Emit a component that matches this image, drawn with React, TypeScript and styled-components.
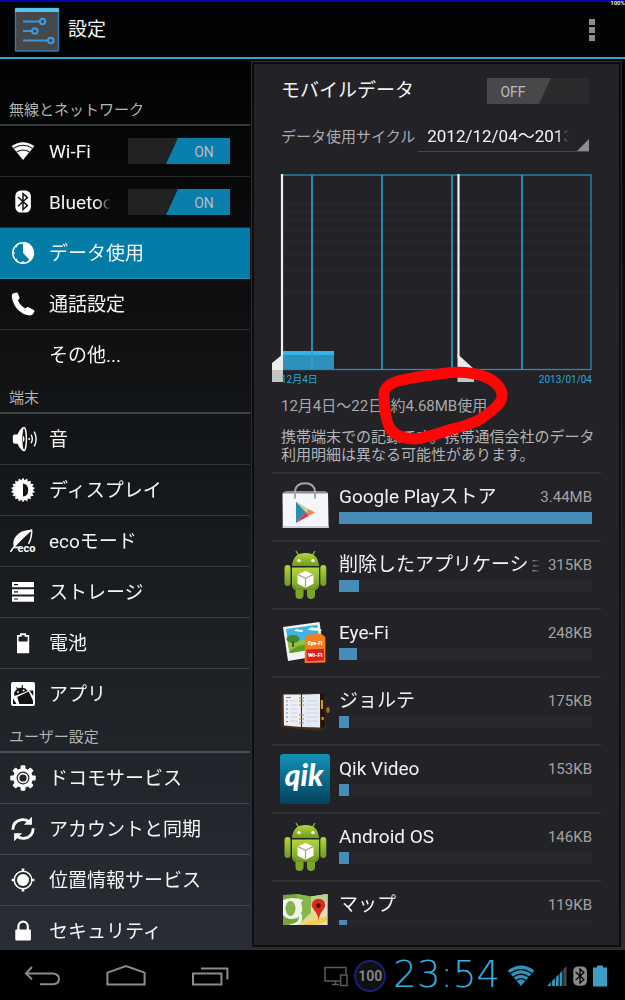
import React from 'react';
import styled, { createGlobalStyle } from 'styled-components';

const GlobalStyle = createGlobalStyle`
  *, *::before, *::after { box-sizing: border-box; }
  body {
    margin: 0;
    background: #000;
    color: #f2f2f2;
    font-family: Roboto, "Noto Sans CJK JP", sans-serif;
  }
`;

/* ---------- page frame ---------- */

const Screen = styled.div`
  display: flex;
  flex-direction: column;
  height: 100vh;
  overflow: hidden;
`;

const BatteryStrip = styled.div`
  position: relative;
  flex: none;
  height: 2px;
  background: #0404ac;
`;

const StripValue = styled.span`
  position: absolute;
  top: 0;
  right: 0;
  font-size: 6px;
  line-height: 6px;
  font-weight: 700;
  color: #e4e4e4;
`;

const ActionBar = styled.header`
  display: flex;
  flex: none;
  align-items: center;
  gap: 8px;
  height: 57px;
  padding: 0 30px 0 14px;
  background: #020303;
  border-bottom: 2px solid #2fa6d4;
`;

const AppTitle = styled.h1`
  flex: 1;
  margin: 0;
  font-size: 19px;
  line-height: 24px;
  font-weight: 400;
`;

const OverflowButton = styled.button`
  display: flex;
  flex-direction: column;
  gap: 2px;
  padding: 0;
  border: 0;
  background: none;
`;

const OverflowDot = styled.span`
  width: 6px;
  height: 6px;
  background: #8b8b8b;
`;

const Body = styled.div`
  display: flex;
  flex: 1;
  min-height: 0;
  background: linear-gradient(#010202, #101214 35%, #1c1f23 65%, #292d34);
`;

/* ---------- sidebar ---------- */

const Sidebar = styled.nav`
  flex: none;
  width: 40%;
  padding-top: 34px;
  overflow: hidden;
`;

const SectionTitle = styled.h2`
  height: 33px;
  margin: 0;
  padding: 5px 9px 0;
  border-bottom: 2px solid rgba(255, 255, 255, 0.2);
  color: #b4b4b4;
  font-size: 15px;
  line-height: 24px;
  font-weight: 400;
`;

const MenuRow = styled.div<{ $selected?: boolean; $last?: boolean }>`
  display: flex;
  align-items: center;
  gap: 17px;
  height: 51px;
  padding-right: 20px;
  border-bottom: 1px solid ${(p) => (p.$last ? 'transparent' : 'rgba(255, 255, 255, 0.13)')};
  background: ${(p) => (p.$selected ? '#047ca8' : 'none')};
`;

const MenuLink = styled.a`
  display: flex;
  flex: 1;
  align-items: center;
  gap: 12px;
  min-width: 0;
  padding: 12px 0 12px 9px;
  color: #f4f4f4;
  font-size: 19px;
  line-height: 24px;
  text-decoration: none;
`;

const FadeLabel = styled.span`
  flex: 1;
  min-width: 0;
  padding-top: 2px;
  overflow: hidden;
  white-space: nowrap;
  mask-image: linear-gradient(to left, transparent, #000 14px);
`;

const MenuIcon = styled.svg`
  flex: none;
  width: 28px;
  height: 28px;
  overflow: visible;
`;

/* ---------- switches ---------- */

const SwitchLabel = styled.label`
  position: relative;
  display: block;
  flex: none;
  width: 102px;
  height: 26px;
`;

const SwitchInput = styled.input`
  position: absolute;
  inset: 0;
  width: 100%;
  height: 100%;
  margin: 0;
  opacity: 0;
`;

const SwitchTrack = styled.span<{ $on: boolean }>`
  display: flex;
  justify-content: ${(p) => (p.$on ? 'flex-end' : 'flex-start')};
  height: 100%;
  background: ${(p) => (p.$on ? '#212323' : '#2b2b2d')};
`;

const SwitchThumb = styled.span<{ $on: boolean }>`
  width: 64px;
  padding-top: 1px;
  padding-left: ${(p) => (p.$on ? '12px' : '0')};
  padding-right: ${(p) => (p.$on ? '0' : '12px')};
  background: ${(p) => (p.$on ? '#087fac' : '#48484a')};
  clip-path: ${(p) =>
    p.$on ? 'polygon(12px 0, 100% 0, 100% 100%, 0 100%)' : 'polygon(0 0, 100% 0, 52px 100%, 0 100%)'};
  color: #b9bcbd;
  font-size: 14px;
  line-height: 26px;
  text-align: center;
`;

/* ---------- detail panel ---------- */

const PanelFrame = styled.main`
  display: flex;
  flex: 1;
  min-width: 0;
  margin: 2px 3px 2px 1px;
  padding: 2px;
  border: 1px solid #2c2e31;
  background: #0b0c0e;
`;

const Panel = styled.div`
  display: flex;
  flex: 1;
  flex-direction: column;
  min-width: 0;
  padding: 0 18px 20px;
  background: #222227;
`;

const SettingRow = styled.div`
  display: flex;
  flex: none;
  align-items: center;
  justify-content: space-between;
  height: 52px;
  padding: 2px 12px 0 9px;
`;

const PanelTitle = styled.h2`
  margin: 0;
  font-size: 19px;
  line-height: 26px;
  font-weight: 400;
`;

const CycleRow = styled.div`
  display: flex;
  flex: none;
  align-items: center;
  gap: 3px;
  height: 42px;
  padding: 0 12px 0 9px;
`;

const CycleLabel = styled.label`
  flex: none;
  color: #ababad;
  font-size: 15px;
  line-height: 24px;
`;

const Spinner = styled.div`
  position: relative;
  flex: 1;
  min-width: 0;
  height: 30px;
  border-bottom: 1px solid #48484b;
  &::after {
    content: '';
    position: absolute;
    right: 0;
    bottom: 0;
    border-style: solid;
    border-width: 0 0 12px 12px;
    border-color: transparent transparent #8d8d8f transparent;
  }
`;

const CycleSelect = styled.select`
  width: calc(100% - 20px);
  height: 28px;
  padding: 0 0 0 9px;
  border: 0;
  appearance: none;
  background: none;
  color: #f4f4f4;
  font-family: inherit;
  font-size: 17px;
  text-overflow: clip;
  mask-image: linear-gradient(to left, transparent, #000 12px);
`;

const ChartBlock = styled.figure`
  position: relative;
  flex: none;
  margin: 16px 9px 0;
`;

const ChartSvg = styled.svg`
  display: block;
  width: 100%;
  height: auto;
  overflow: visible;
`;

const ChartAxis = styled.figcaption`
  display: flex;
  justify-content: space-between;
  padding-top: 1px;
  color: #2fa6d4;
  font-size: 10px;
  line-height: 16px;
`;

const Marking = styled.svg`
  position: absolute;
  top: 192px;
  left: 92px;
  width: 140px;
  height: 84px;
  pointer-events: none;
`;

const UsageText = styled.p`
  flex: none;
  margin: 9px 9px 0;
  color: #a9a9ab;
  font-size: 15px;
  line-height: 18px;
  white-space: nowrap;
`;

const UsageNote = styled(UsageText)`
  margin-top: 13px;
  color: #b4b4b6;
`;

const AppList = styled.ul`
  flex: 1;
  min-height: 0;
  margin: 8px 0 0;
  padding: 0;
  overflow: hidden;
  list-style: none;
`;

const AppItem = styled.li`
  display: flex;
  align-items: center;
  gap: 9px;
  height: 68px;
  padding: 0 9px 0 8px;
  border-top: 2px solid #323235;
`;

const AppIcon = styled.svg`
  flex: none;
  width: 50px;
  height: 50px;
`;

const AppInfo = styled.div`
  flex: 1;
  align-self: flex-start;
  min-width: 0;
  padding-top: 9px;
`;

const AppLine = styled.div`
  display: flex;
  align-items: center;
  gap: 8px;
  font-size: 19px;
  line-height: 24px;
`;

const AppSize = styled.span`
  padding-top: 2px;
  color: #a2a2a4;
  font-size: 15px;
  line-height: 22px;
`;

const BarTrack = styled.div`
  height: 12px;
  margin-top: 3px;
  background: #28272c;
`;

const BarFill = styled.div`
  height: 100%;
  background: #468cb9;
`;

/* ---------- system bar ---------- */

const SystemBar = styled.footer`
  display: flex;
  flex: none;
  align-items: center;
  justify-content: space-between;
  height: 50px;
  padding: 2px 18px 0 0;
  background: #000;
`;

const NavKeys = styled.div`
  display: flex;
`;

const NavKey = styled.button`
  display: flex;
  justify-content: center;
  width: 84px;
  padding: 0;
  border: 0;
  background: none;
`;

const NavSvg = styled.svg`
  width: 40px;
  height: 24px;
  fill: none;
  stroke: #8c8c8c;
  stroke-width: 2;
`;

const Status = styled.div`
  display: flex;
  align-items: center;
  gap: 6px;
`;

const Level = styled.span`
  display: flex;
  align-items: center;
  justify-content: center;
  width: 32px;
  height: 32px;
  border: 2px solid #1b2078;
  border-radius: 50%;
  background: #101013;
  color: #808080;
  font-size: 14px;
  font-weight: 700;
`;

const Clock = styled.time`
  padding: 0 1px 3px;
  color: #35b0e0;
  font-family: "DejaVu Sans", sans-serif;
  font-size: 37px;
  line-height: 40px;
  font-weight: 200;
`;

const StatusSvg = styled.svg<{ $w: number }>`
  flex: none;
  width: ${(p) => p.$w}px;
  height: 24px;
`;

/* ---------- icons ---------- */

const DARK = '#121416';

const toothPath = (count: number, outer: number, inner: number) =>
  Array.from({ length: count * 2 }, (_, i) => {
    const r = i % 2 ? inner : outer;
    const a = (Math.PI * i) / count - Math.PI / 2;
    return `${i ? 'L' : 'M'}${(14 + r * Math.cos(a)).toFixed(2)} ${(14 + r * Math.sin(a)).toFixed(2)}`;
  }).join('') + 'Z';

const WifiShape = ({ color, bg }: { color: string; bg: string }) => (
  <>
    <path d="M14 23 2.6 9Q14 1.4 25.4 9Z" fill={color} />
    <path d="M4.6 11.4Q14 5.2 23.4 11.4M7.6 15Q14 11 20.4 15" fill="none" stroke={bg} strokeWidth="1.1" />
  </>
);

const BluetoothShape = ({ color, bg }: { color: string; bg: string }) => (
  <>
    <rect x="6.3" y="2.6" width="15.6" height="22" rx="5.5" fill={color} />
    <path d="M9 9l9.4 8.6-4.4 4V5.6l4.4 4L9 18.2" fill="none" stroke={bg} strokeWidth="1.5" />
  </>
);

const icons: Record<string, React.ReactNode> = {
  wifi: <WifiShape color="#fff" bg={DARK} />,
  bluetooth: <BluetoothShape color="#fff" bg={DARK} />,
  data: (
    <>
      <circle cx="14" cy="14" r="10.2" fill="none" stroke="#fff" strokeWidth="1.5" />
      <path d="M14 14V3A11 11 0 0 1 21.6 22Z" fill="#fff" />
      <path d="M4 14h2M14 24v-2M6.9 21.1l1.2-1.2M6.9 6.9l1.2 1.2" stroke="#fff" strokeWidth="1.2" />
    </>
  ),
  phone: (
    <path
      d="M4 3.6 7.2 2.6Q8.4 2.4 8.9 3.5L10.5 7.4Q10.8 8.5 9.9 9.2L8.9 10.3Q11 15.4 16.3 18.6L17.7 17.5Q18.6 16.8 19.6 17.3L24.7 20Q25.8 20.7 25.3 21.7 24 25.2 20.5 25.5 13.5 25 8 18.8 3 12.5 2.8 6 2.8 4.2 4 3.6Z"
      fill="#fff"
    />
  ),
  sound: (
    <>
      <path d="M3.8 11.5Q3.8 9.4 5.8 9.4H8.6Q10.6 4 14.6 1.8V26.2Q10.6 24 8.6 18.7H5.8Q3.8 18.7 3.8 16.6Z" fill="#fff" />
      <ellipse cx="15" cy="14" rx="2.4" ry="11.6" fill={DARK} stroke="#fff" strokeWidth="1.4" />
      <path d="M14 10.6Q17 14 14 17.4Z" fill="#fff" />
      <circle cx="20.2" cy="14" r="1" fill="#fff" />
      <path d="M22.2 9.8Q24.4 14 22.2 18.2M25.2 6.6Q29 14 25.2 21.4" fill="none" stroke="#fff" strokeWidth="1.4" />
    </>
  ),
  display: (
    <>
      <path d={toothPath(18, 12.2, 9.8)} fill="#fff" />
      <path d="M14 7.4Q19.2 8 19.2 14 19.2 20 14 20.6Z" fill={DARK} />
    </>
  ),
  eco: (
    <>
      <path d="M5 20.5Q2.6 13.5 8 8 13 3 22 2.8L5 20.5Z" fill="#fff" />
      <path d="M22.6 2.6Q23.2 10 19.5 17M1.6 25Q4 19 22.6 2.6M4.5 20Q7 21 9.5 20" fill="none" stroke="#fff" strokeWidth="1.5" />
      <text x="8.6" y="25.4" fill="#fff" fontFamily="Roboto, sans-serif" fontSize="11" fontWeight="700">
        eco
      </text>
    </>
  ),
  storage: (
    <>
      <path d="M3 4h22v5.3H3ZM3 11.2h22v5.3H3ZM3 18.4h22v5.3H3Z" fill="#fff" />
      <path d="M5 6.6h4M5 13.8h4M5 21h4" stroke={DARK} strokeWidth="1.2" />
    </>
  ),
  battery: (
    <path fillRule="evenodd" d="M8 6h3V4.2h6V6h3.2v18.3H8ZM9.6 7.8v4.6h9V7.8h-3V6.2h-3v1.6Z" fill="#fff" />
  ),
  apps: (
    <>
      <rect x="2" y="2" width="24" height="24" rx="2" fill="#fff" />
      <path d="M5 13.5Q6 9.6 11 7.8 16.5 7 18.8 11L5.6 16ZM8.2 17 19.6 11.4 24 20.5V24H10.4ZM4 18.5 7.6 24H4ZM20.5 10.5l3.8 5.5V10.5Z" fill={DARK} />
      <path d="M7.4 7.5l2 2M13.4 5l-.2 3" stroke={DARK} strokeWidth="1.1" />
      <circle cx="9" cy="12" r=".9" fill="#fff" />
      <circle cx="14.6" cy="10.4" r=".9" fill="#fff" />
    </>
  ),
  gear: (
    <>
      <circle cx="14" cy="14" r="9.8" fill="#fff" />
      {[0, 45, 90, 135].map((a) => (
        <rect key={a} x="11.6" y="1.3" width="4.8" height="25.4" rx="1" fill="#fff" transform={`rotate(${a} 14 14)`} />
      ))}
      <circle cx="14" cy="14" r="5.8" fill="#fff" stroke="#22262b" strokeWidth="1.2" />
      <circle cx="14" cy="14" r="3.6" fill="#22262b" />
    </>
  ),
  sync: (
    <>
      <path d="M3.8 14.8Q4 5.6 13.2 4.6 17 4.4 20 6.6M24.2 13.2Q24 22.4 14.8 23.4 11 23.6 8 21.4" fill="none" stroke="#fff" strokeWidth="2.8" />
      <path d="M22.9 1.8V9.8H14.8ZM5.1 26.2V18.2H13.2Z" fill="#fff" />
    </>
  ),
  location: (
    <>
      <circle cx="14" cy="14" r="6" fill="#fff" />
      <circle cx="14" cy="14" r="8.8" fill="none" stroke="#fff" strokeWidth="1.5" />
      <path d="M14 2.6v3M14 22.4v3M2.6 14h3M22.4 14h3" stroke="#fff" strokeWidth="2.6" />
    </>
  ),
  lock: (
    <>
      <rect x="6.3" y="12.6" width="15.6" height="11" rx="1" fill="#fff" />
      <path d="M9.4 13V9.4a4.7 4.7 0 0 1 9.4 0V13" fill="none" stroke="#fff" strokeWidth="2.2" />
    </>
  ),
  none: null,
};

const AndroidArt = () => (
  <>
    <defs>
      <linearGradient id="droid" x1="0" y1="0" x2="0" y2="1">
        <stop offset="0" stopColor="#b4d63c" />
        <stop offset="1" stopColor="#6f9a22" />
      </linearGradient>
    </defs>
    <path d="M16 1l3 5M35 1l-3 5" stroke="#8fb52c" strokeWidth="1.4" />
    <path d="M12 16Q13 3 25.5 3 38 3 39 16Z" fill="url(#droid)" />
    <path d="M12 17.5H39V35Q39 40 34 40H17Q12 40 12 35Z" fill="url(#droid)" />
    <rect x="4.5" y="15" width="6" height="21" rx="3" fill="url(#droid)" />
    <rect x="40.3" y="15" width="6" height="21" rx="3" fill="url(#droid)" />
    <rect x="15.5" y="36" width="8" height="13" rx="4" fill="#7da529" />
    <rect x="27" y="36" width="8" height="13" rx="4" fill="#7da529" />
    <path d="M13 35Q14 39 18 39H33Q37 39 38 35" fill="none" stroke="#5f861b" strokeWidth="1" />
    <circle cx="19" cy="10.6" r="1.7" fill="#fff" />
    <circle cx="33" cy="10.6" r="1.7" fill="#fff" />
    <path d="M25.5 21l8 3.4v9.4l-8 4-8-4v-9.4Z" fill="#fff" />
    <path d="M17.8 24.6l7.7 3.6 7.7-3.6M25.5 28.2v9" fill="none" stroke="#9a9f90" strokeWidth="1.2" />
  </>
);

const appArt: Record<string, React.ReactNode> = {
  play: (
    <>
      <path d="M3 10.5 6 9h39l3 1.5V16H3Z" fill="#8d8e94" />
      <path d="M2.5 11.5H48L48.6 46H2.8Z" fill="#f6f5fa" />
      <path d="M2.8 44H48.6V46H2.8Z" fill="#cfced8" />
      <path d="M15 16.5V10Q15.4 1.2 25 1.2 34.6 1.2 35 10V16.5" fill="none" stroke="#a5a6ad" strokeWidth="2" />
      <path d="M16 19.5V41L26 30.3Z" fill="#2f8ea6" />
      <path d="M16 19.5 28.6 27 26 30.3Z" fill="#b7d9a0" />
      <path d="M28.6 27 35 30.4 28.6 34 26 30.3Z" fill="#f08a4b" />
      <path d="M16 41 28.6 34 26 30.3Z" fill="#d9345a" />
    </>
  ),
  android: <AndroidArt />,
  eyefi: (
    <>
      <path d="M3 9 39.5 4 44 37 8 43Z" fill="#f3f5f5" />
      <path d="M6 11 37.4 6.8 40.4 30 9.6 35Z" fill="#3fb2e6" />
      <path d="M7.6 24 39.2 20 40.4 30 9.6 35Z" fill="#8cc63f" />
      <path d="M10 33Q22 23 40 28L40.4 30 9.6 35Z" fill="#5c9e27" />
      <ellipse cx="13" cy="21" rx="6.5" ry="4" fill="#3f8a2a" />
      <path d="M13 23v6" stroke="#6b4a22" strokeWidth="2" />
      <path d="M14 13Q16 10 19 12 23 11 23 14ZM28 12Q31 8 34 10 39 9 42 13Z" fill="#fff" />
      <path d="M25 17 41 15.4 45.4 19V44.5L24.6 45Z" fill="#f07f1f" />
      <path d="M26.5 31.5 44 30.8V42.5L26.5 43.2Z" fill="#df1f26" />
      <text x="28" y="27.4" fill="#fff" fontFamily="Roboto, sans-serif" fontSize="5" fontWeight="900">Eye-Fi</text>
      <text x="28" y="38.6" fill="#fff" fontFamily="Roboto, sans-serif" fontSize="6" fontWeight="900">Wi-Fi</text>
    </>
  ),
  jorte: (
    <>
      <path d="M1.6 8 44 6.4 46 42 38 45 1.6 41Z" fill="#4a2c14" />
      <path d="M40 7l4-.6 1 34-4 2.6Z" fill="#23130a" />
      <path d="M3.6 8.6H21V41L4 39.4Z" fill="#eef0f8" />
      <path d="M22 8.6 40 8V41.4L22 41Z" fill="#e4ebf7" />
      <path d="M21.4 8.6V41.4" stroke="#3a2a1c" strokeWidth="1" />
      <path d="M19 12h5M19 15h5M19 19h5M19 29h5M19 33h5M19 37h5" stroke="#b08a3c" strokeWidth="1.2" />
      <path d="M10 15h8M10 19h8M10 23h8M10 27h8M10 31h8M10 35h8M26 15h12M26 19h12M26 23h12M26 27h12M26 31h12M26 35h12" stroke="#c5cbd6" strokeWidth=".8" />
      <path d="M6 15h2M6 19h2M6 23h2M6 27h2M6 31h2" stroke="#7f8aa3" strokeWidth="1" />
      <path d="M6 11.5h5M6 35.5h2" stroke="#d65c5c" strokeWidth="1" />
      <path d="M42 14v9M42.6 31v3" stroke="#c99a2e" strokeWidth="2.2" />
      <ellipse cx="48" cy="24" rx="1.6" ry="3" fill="#a8761c" />
    </>
  ),
  qik: (
    <>
      <defs>
        <linearGradient id="qik" x1="0" y1="0" x2="0" y2="1">
          <stop offset="0" stopColor="#1291b5" />
          <stop offset="1" stopColor="#05425f" />
        </linearGradient>
      </defs>
      <rect width="50" height="50" rx="3" fill="url(#qik)" />
      <text x="24" y="32" textAnchor="middle" fill="#fff" fontFamily="Lato, sans-serif" fontSize="30" fontStyle="italic" fontWeight="900">
        qik
      </text>
    </>
  ),
  maps: (
    <>
      <path d="M3 5 17 4 31 6.6 47.5 4V48H3Z" fill="#74a63c" />
      <path d="M17 4 31 6.6V48H17Z" fill="#86b64c" />
      <path d="M31 6.6 47.5 4V48H31Z" fill="#ecd9cf" />
      <path d="M31 6.6 47.5 4V12L31 17Z" fill="#b5d18f" />
      <path d="M17 36 38 16 44 21 24 46H17Z" fill="#e9d98a" />
      <path d="M22 36 30 32 40 40V48H22Z" fill="#3a5fae" />
      <path d="M24 34 47 26V31L30 38Z" fill="#f1cf4a" />
      <path d="M3 10Q12 6 23 10L21 13Q25 22 17 28 8 31 3 25Z" fill="#eef4e6" />
      <ellipse cx="10.5" cy="18.5" rx="5" ry="7.4" fill="#86b04f" />
      <path d="M20 24Q23 34 10 36" fill="none" stroke="#eef4e6" strokeWidth="3.4" />
      <path d="M38.6 31Q38 24 34 20 31.4 17 31.8 14.6 33 9 38.6 8.8 44.2 9 45.2 14.6 45.4 17.6 43 20 39.2 24 38.6 31Z" fill="#dc2a17" />
      <circle cx="38.4" cy="15.6" r="2.3" fill="#4d0d08" />
    </>
  ),
};

/* ---------- data ---------- */

type Entry = { icon: string; label: string; toggle?: boolean; selected?: boolean };

const sections: { title: string; entries: Entry[] }[] = [
  {
    title: '無線とネットワーク',
    entries: [
      { icon: 'wifi', label: 'Wi-Fi', toggle: true },
      { icon: 'bluetooth', label: 'Bluetooth', toggle: true },
      { icon: 'data', label: 'データ使用', selected: true },
      { icon: 'phone', label: '通話設定' },
      { icon: 'none', label: 'その他...' },
    ],
  },
  {
    title: '端末',
    entries: [
      { icon: 'sound', label: '音' },
      { icon: 'display', label: 'ディスプレイ' },
      { icon: 'eco', label: 'ecoモード' },
      { icon: 'storage', label: 'ストレージ' },
      { icon: 'battery', label: '電池' },
      { icon: 'apps', label: 'アプリ' },
    ],
  },
  {
    title: 'ユーザー設定',
    entries: [
      { icon: 'gear', label: 'ドコモサービス' },
      { icon: 'sync', label: 'アカウントと同期' },
      { icon: 'location', label: '位置情報サービス' },
      { icon: 'lock', label: 'セキュリティ' },
    ],
  },
];

const apps = [
  { art: 'play', name: 'Google Playストア', size: '3.44MB', share: 100 },
  { art: 'android', name: '削除したアプリケーション', size: '315KB', share: 8 },
  { art: 'eyefi', name: 'Eye-Fi', size: '248KB', share: 7 },
  { art: 'jorte', name: 'ジョルテ', size: '175KB', share: 4 },
  { art: 'qik', name: 'Qik Video', size: '153KB', share: 4 },
  { art: 'android', name: 'Android OS', size: '146KB', share: 4 },
  { art: 'maps', name: 'マップ', size: '119KB', share: 3 },
];

/* ---------- components ---------- */

const Toggle = ({ name, on }: { name: string; on: boolean }) => (
  <SwitchLabel>
    <SwitchInput type="checkbox" aria-label={name} defaultChecked={on} />
    <SwitchTrack $on={on}>
      <SwitchThumb $on={on}>{on ? 'ON' : 'OFF'}</SwitchThumb>
    </SwitchTrack>
  </SwitchLabel>
);

const SettingsLogo = () => (
  <svg width="46" height="46" viewBox="0 0 46 46" aria-hidden="true">
    <rect x="1.5" y="1.5" width="43" height="42.5" rx="1" fill="#474747" stroke="#2f7db4" strokeWidth="1.4" />
    <path d="M1 2.2Q1 1 2.2 1H43.8Q45 1 45 2.2V5H1Z" fill="#55c3ee" />
    <path d="M9 14.5H39M9 24H39M9 33.5H39" stroke="#2a5577" strokeWidth="1.6" />
    <path d="M9 14.5H26M9 24H18M9 33.5H34" stroke="#3b97dc" strokeWidth="1.8" />
    <g fill="#3c4a55" stroke="#3f9be0" strokeWidth="2">
      <circle cx="28.6" cy="14.5" r="2.7" />
      <circle cx="20.8" cy="24" r="2.7" />
      <circle cx="36.8" cy="33.5" r="2.7" />
    </g>
  </svg>
);

const UsageChart = () => (
  <ChartSvg viewBox="0 0 311 197" role="img" aria-label="データ使用グラフ">
    <path d="M2 30.5H310M2 38.5H310M2 46.5H310M2 56.5H310M2 67.5H310M2 80.5H310M2 96.5H310M2 118.5H310" stroke="#2b2b2c" />
    <rect x="1" y="177" width="52" height="19" fill="#2e91bb" />
    <rect x="1" y="177" width="52" height="4" fill="#34b4e6" />
    <rect x="1" y="1" width="309" height="194.5" fill="none" stroke="#2b8cb2" strokeWidth="1.3" />
    <path d="M31 1V195M101 1V195M171 1V195M241 1V195" stroke="#2fa1cf" strokeWidth="1.6" />
    <path d="M1 0V184M177.5 0V184" stroke="#eee" strokeWidth="2.2" />
    <path d="M2 180V196H-9V189Z" fill="#ececec" />
    <path d="M-9 196H2V208H-9Z" fill="#c4c4c4" />
    <path d="M176.5 180 193 195V196H176.5Z" fill="#ececec" />
    <path d="M176.5 196H193V208H176.5Z" fill="#c4c4c4" />
  </ChartSvg>
);

export default function App() {
  return (
    <Screen>
      <GlobalStyle />
      <BatteryStrip>
        <StripValue>100%</StripValue>
      </BatteryStrip>
      <ActionBar>
        <SettingsLogo />
        <AppTitle>設定</AppTitle>
        <OverflowButton aria-label="メニュー">
          <OverflowDot />
          <OverflowDot />
          <OverflowDot />
        </OverflowButton>
      </ActionBar>

      <Body>
        <Sidebar>
          {sections.map((section) => (
            <section key={section.title}>
              <SectionTitle>{section.title}</SectionTitle>
              {section.entries.map((e, i) => (
                <MenuRow key={e.label} $selected={e.selected} $last={i === section.entries.length - 1}>
                  <MenuLink href="#">
                    <MenuIcon viewBox="0 0 28 28" aria-hidden="true">
                      {icons[e.icon]}
                    </MenuIcon>
                    <FadeLabel>{e.label}</FadeLabel>
                  </MenuLink>
                  {e.toggle && <Toggle name={e.label} on />}
                </MenuRow>
              ))}
            </section>
          ))}
        </Sidebar>

        <PanelFrame>
          <Panel>
            <SettingRow>
              <PanelTitle>モバイルデータ</PanelTitle>
              <Toggle name="モバイルデータ" on={false} />
            </SettingRow>
            <CycleRow>
              <CycleLabel htmlFor="cycle">データ使用サイクル</CycleLabel>
              <Spinner>
                <CycleSelect id="cycle">
                  <option>2012/12/04〜2013/01/03</option>
                </CycleSelect>
              </Spinner>
            </CycleRow>
            <ChartBlock>
              <UsageChart />
              <ChartAxis>
                <span>12月4日</span>
                <span>2013/01/04</span>
              </ChartAxis>
              <Marking viewBox="0 0 140 84" aria-hidden="true">
                <path
                  d="M11 27Q12 20 22 16 34 12 70 7.5 92 4 110 10 126 16 129 27 130 35 123 41 113 50 104 55 90 61 76 64 56 71 42 73 27 73 19 65 11 55 11 27Z"
                  fill="none"
                  stroke="#fe0606"
                  strokeWidth="11"
                  strokeLinejoin="round"
                />
              </Marking>
            </ChartBlock>
            <UsageText>12月4日〜22日: 約4.68MB使用</UsageText>
            <UsageNote>
              携帯端末での記録です。携帯通信会社のデータ
              <br />
              利用明細は異なる可能性があります。
            </UsageNote>
            <AppList>
              {apps.map((app) => (
                <AppItem key={app.name}>
                  <AppIcon viewBox="0 0 50 50" aria-hidden="true">
                    {appArt[app.art]}
                  </AppIcon>
                  <AppInfo>
                    <AppLine>
                      <FadeLabel>{app.name}</FadeLabel>
                      <AppSize>{app.size}</AppSize>
                    </AppLine>
                    <BarTrack>
                      <BarFill style={{ width: `${app.share}%` }} />
                    </BarTrack>
                  </AppInfo>
                </AppItem>
              ))}
            </AppList>
          </Panel>
        </PanelFrame>
      </Body>

      <SystemBar>
        <NavKeys>
          <NavKey aria-label="戻る">
            <NavSvg viewBox="0 0 40 24">
              <path d="M10 3 4 9.4 10 15.4M4 9.4H31Q37 10 37 15 37 20 31 20.2H18" />
            </NavSvg>
          </NavKey>
          <NavKey aria-label="ホーム">
            <NavSvg viewBox="0 0 40 24">
              <path d="M1.4 8.6 20 2 38.6 8.6V20.4H1.4Z" />
            </NavSvg>
          </NavKey>
          <NavKey aria-label="履歴">
            <NavSvg viewBox="0 0 40 24">
              <path d="M3 9.6H31.4V20.4H3ZM11 4.4H37.4V15.4" />
            </NavSvg>
          </NavKey>
        </NavKeys>
        <Status>
          <StatusSvg $w={24} viewBox="0 0 24 24" aria-hidden="true">
            <path d="M16 17H1V3.6H22V10M8 20.4H15M11.5 17V20M16.6 11H23V21.4H16.6Z" fill="none" stroke="#5b5b5b" strokeWidth="1.5" />
          </StatusSvg>
          <Level>100</Level>
          <Clock>23:54</Clock>
          <StatusSvg $w={28} viewBox="0 0 28 24" aria-hidden="true">
            <path d="M14 22 0.6 6.6Q14-3.4 27.4 6.6Z" fill="#2f94bd" />
            <path d="M3.2 9.6Q14 1.6 24.8 9.6M6.2 13Q14 7.2 21.8 13M9.2 16.4Q14 13 18.8 16.4" fill="none" stroke="#000" strokeWidth="1.2" />
          </StatusSvg>
          <StatusSvg $w={26} viewBox="-6 0 26 24" aria-hidden="true">
            <path d="M0 22 16 6V22Z" fill="#3297c0" />
            <path d="M16 5.6 19.6 2V22H16Z" fill="#474747" />
            <path d="M4.4 16V22M8.4 12V22M12.2 8V22M15.8 4V22" stroke="#000" strokeWidth="1" />
          </StatusSvg>
          <StatusSvg $w={14} viewBox="6 2 16 23" aria-hidden="true">
            <BluetoothShape color="#8b8b8b" bg="#000" />
          </StatusSvg>
          <StatusSvg $w={14} viewBox="0 0 14 24" aria-hidden="true">
            <path d="M0 3.6H4V1.6H10V3.6H14V22.4H0Z" fill="#3c9dc6" />
          </StatusSvg>
        </Status>
      </SystemBar>
    </Screen>
  );
}
